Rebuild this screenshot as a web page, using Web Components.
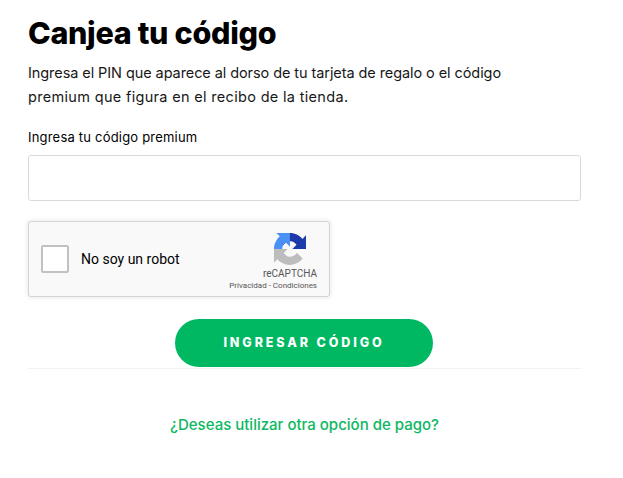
<!DOCTYPE html>
<html lang="es">
<head>
<meta charset="utf-8">
<title>Canjea tu código</title>
<style>
    html, body { margin: 0; background: #fff; }
    body { font-family: "Inter", "Liberation Sans", sans-serif; color: #181818; }
</style>
</head>
<body>
<redeem-page>
    <span slot="title">Canjea tu código</span>
    <span slot="intro">Ingresa el PIN que aparece al dorso de tu tarjeta de regalo o el código</span>
    <span slot="intro" class="wide">premium que figura en el recibo de la tienda.</span>
    <code-field label="Ingresa tu código premium"></code-field>
    <robot-check></robot-check>
    <pill-button slot="button">Ingresar código</pill-button>
    <a slot="link" href="#">¿Deseas utilizar otra opción de pago?</a>
</redeem-page>

<script>
class RedeemPage extends HTMLElement {
    static {
        customElements.define('redeem-page', this)
    }
    constructor () {
        super()
        this.attachShadow({mode: 'open'}).innerHTML = `
            <style>
                :host { display: block; width: 553px; padding: 0 0 0 28px; }
                h1 { margin: 0; padding-top: 15px; font: 800 30.500px/36px Inter, sans-serif; letter-spacing: -.3px; color: #000; }
                p { margin: 0; padding-top: 10px; font: 400 14.500px/24px Inter, sans-serif; letter-spacing: -.08px; color: #181818; }
                ::slotted([slot=intro]) { display: block; }
                ::slotted(.wide) { letter-spacing: .32px; }
                .button { display: flex; justify-content: center; padding: 22px 1px 0 0; }
                hr { margin: 1px 0 0; border: 0; height: 1px; background: #f2f2f2; }
                .link { text-align: center; padding-top: 45px; font: 500 15px/22px Inter, sans-serif; }
                ::slotted(a) { color: #0cb862; text-decoration: none; }
            </style>
            <h1><slot name="title"></slot></h1>
            <p><slot name="intro"></slot></p>
            <slot></slot>
            <div class="button"><slot name="button"></slot></div>
            <hr>
            <div class="link"><slot name="link"></slot></div>
        `
    }
}

class CodeField extends HTMLElement {
    static {
        customElements.define('code-field', this)
    }
    constructor () {
        super()
        this.attachShadow({mode: 'open'}).innerHTML = `
            <style>
                :host { display: block; padding-top: 18px; }
                label { display: block; font: 400 13px/20px Inter, sans-serif; letter-spacing: .2px; color: #000; margin-bottom: 8px; }
                input { display: block; box-sizing: border-box; width: 100%; height: 46px; border: 1px solid #d9dadc; border-radius: 3px; background: #fff; outline: 0; padding: 0 14px; }
            </style>
            <label for="code"></label>
            <input id="code" type="text">
        `
    }
    connectedCallback () {
        this.shadowRoot.querySelector('label').textContent = this.getAttribute('label')
    }
}

class RobotCheck extends HTMLElement {
    static {
        customElements.define('robot-check', this)
    }
    constructor () {
        super()
        this.attachShadow({mode: 'open'}).innerHTML = `
            <style>
                :host { display: block; box-sizing: border-box; width: 302px; height: 76px; margin-top: 20px; background: #f9f9f9; border: 1px solid #d3d3d3; border-radius: 3px; box-shadow: 0 0 4px 1px rgba(0,0,0,.08); font-family: Roboto, sans-serif; }
                .row { display: flex; align-items: center; height: 100%; padding-left: 12px; }
                .box { width: 24px; height: 24px; border: 2px solid #c1c1c1; border-radius: 2px; background: #fff; }
                .text { margin-left: 12px; font-size: 14px; color: #000; flex: 1; }
                .brand { padding: 6px 12px 0 0; display: flex; flex-direction: column; align-items: flex-end; color: #555; }
                svg { display: block; width: 32px; height: 32px; margin-right: 11px; }
                .name { font-size: 10px; line-height: 13px; margin-top: 2px; }
                .terms { font-size: 8px; line-height: 10px; margin-top: 1px; white-space: nowrap; }
            </style>
            <div class="row">
                <div class="box"></div>
                <div class="text">No soy un robot</div>
                <div class="brand">
                    <svg viewBox="0 0 64 64">
                        <path fill="#1c3aa9" d="M64 31.955l-.033-1.37V4.687l-7.16 7.16C50.948 4.674 42.033.093 32.05.093c-10.4 0-19.622 4.96-25.458 12.64l11.736 11.86a15.55 15.55 0 0 1 4.754-5.334c2.05-1.6 4.952-2.906 8.968-2.906.485 0 .86.057 1.135.163 4.976.393 9.288 3.14 11.828 7.124l-8.307 8.307c10.522-.04 22.4-.066 27.295.005"/>
                        <path fill="#4a90f5" d="M31.9.002l-1.37.033H4.632l7.16 7.16C4.617 13.055.035 21.97.035 31.953c0 10.4 4.96 19.622 12.64 25.458l11.86-11.736a15.55 15.55 0 0 1-5.334-4.754c-1.6-2.05-2.906-4.952-2.906-8.968 0-.485.057-.86.163-1.135.393-4.976 3.14-9.288 7.124-11.828l8.307 8.307c-.04-10.522-.066-22.4.005-27.295"/>
                        <path fill="#bdbdbd" d="M.002 32l.033 1.37v25.898l7.16-7.16c5.86 7.173 14.775 11.754 24.76 11.754 10.4 0 19.622-4.96 25.458-12.64l-11.736-11.86a15.55 15.55 0 0 1-4.754 5.334c-2.05 1.6-4.952 2.906-8.968 2.906-.485 0-.86-.057-1.135-.163-4.976-.393-9.288-3.14-11.828-7.124l8.307-8.307c-10.522.04-22.4.066-27.295-.005"/>
                    </svg>
                    <div class="name">reCAPTCHA</div>
                    <div class="terms">Privacidad - Condiciones</div>
                </div>
            </div>
        `
    }
}

class PillButton extends HTMLElement {
    static {
        customElements.define('pill-button', this)
    }
    constructor () {
        super()
        this.attachShadow({mode: 'open'}).innerHTML = `
            <style>
                :host { display: inline-flex; align-items: center; justify-content: center; width: 258px; height: 48px; border-radius: 24px; background: #00b862; color: #fff; font: 800 12.500px/16px Inter, sans-serif; letter-spacing: 2.900px; text-transform: uppercase; }
            </style>
            <slot></slot>
        `
    }
}
</script>
</body>
</html>
